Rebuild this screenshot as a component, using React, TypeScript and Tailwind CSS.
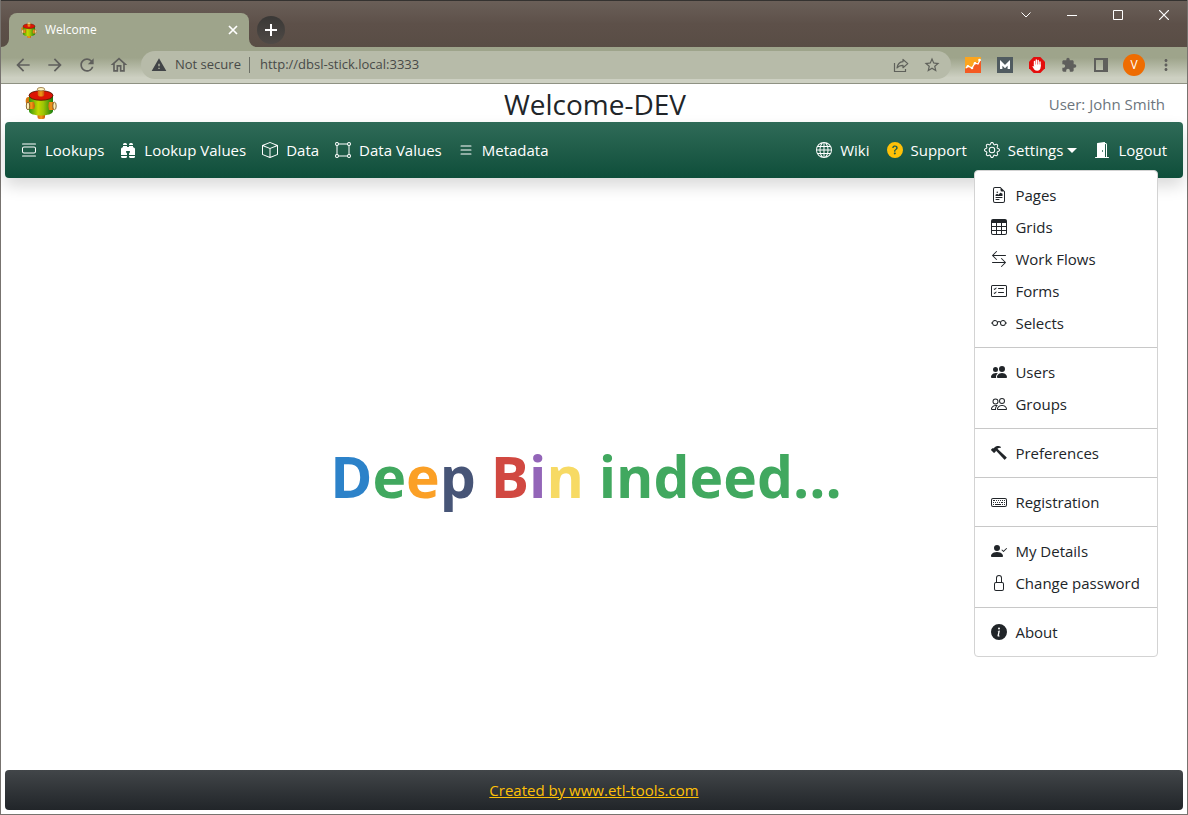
import type { ComponentType } from "react";
import {
  BsArrowLeftRight, BsBinocularsFill, BsBoundingBoxCircles, BsBox, BsCardChecklist, BsDoorOpenFill,
  BsEyeglasses, BsFileEarmarkRichtext, BsGear, BsGlobe, BsHammer, BsInfoCircleFill, BsKeyboard,
  BsList, BsLock, BsPeople, BsPeopleFill, BsPersonCheckFill, BsQuestionCircleFill, BsTable, BsViewList,
} from "react-icons/bs";
import {
  MdArrowBack, MdArrowForward, MdOutlineHome, MdRefresh, MdWarning, MdStarBorder, MdExtension,
  MdMoreVert,
} from "react-icons/md";

type Icon = ComponentType<{ className?: string }>;
type Entry = { label: string; icon: Icon; tint?: string };

const leftNav: Entry[] = [
  { label: "Lookups", icon: BsViewList },
  { label: "Lookup Values", icon: BsBinocularsFill },
  { label: "Data", icon: BsBox },
  { label: "Data Values", icon: BsBoundingBoxCircles },
  { label: "Metadata", icon: BsList },
];

const menu: Entry[][] = [
  [
    { label: "Pages", icon: BsFileEarmarkRichtext },
    { label: "Grids", icon: BsTable },
    { label: "Work Flows", icon: BsArrowLeftRight },
    { label: "Forms", icon: BsCardChecklist },
    { label: "Selects", icon: BsEyeglasses },
  ],
  [
    { label: "Users", icon: BsPeopleFill },
    { label: "Groups", icon: BsPeople },
  ],
  [{ label: "Preferences", icon: BsHammer }],
  [{ label: "Registration", icon: BsKeyboard }],
  [
    { label: "My Details", icon: BsPersonCheckFill },
    { label: "Change password", icon: BsLock },
  ],
  [{ label: "About", icon: BsInfoCircleFill }],
];

const headline = [
  ["D", "text-[#2c82c9]"], ["e", "text-[#41a85f]"], ["e", "text-[#fba026]"], ["p", "text-[#475577]"],
  [" ", ""], ["B", "text-[#d14841]"], ["i", "text-[#9365b8]"], ["n", "text-[#f7da64]"],
  [" indeed...", "text-[#41a85f]"],
];

function Barrel({ className, id }: { className: string; id: string }) {
  return (
    <svg viewBox="0 0 32 32" className={className} aria-hidden="true">
      <defs>
        <linearGradient id={id + "g"}>
          <stop offset="0" stopColor="#2f9410" />
          <stop offset=".38" stopColor="#c3d800" />
          <stop offset=".6" stopColor="#9cc406" />
          <stop offset="1" stopColor="#187c10" />
        </linearGradient>
        <linearGradient id={id + "o"}>
          <stop offset="0" stopColor="#d66a10" />
          <stop offset=".5" stopColor="#f09a18" />
          <stop offset="1" stopColor="#c85408" />
        </linearGradient>
      </defs>
      <rect x="12.500" y="26" width="7.500" height="6" rx="2" fill={`url(#${id}o)`} />
      <ellipse cx="3.500" cy="14" rx="2.800" ry="4" fill="#d9780c" />
      <path d="M4 8v16c0 6 24 6 24 0V8Z" fill={`url(#${id}g)`} />
      <ellipse cx="16" cy="8.500" rx="12" ry="4.800" fill="#dc1405" stroke="#4d1604" strokeWidth=".8" />
      <rect x="12.800" y="2" width="6.400" height="7.500" rx="2" fill={`url(#${id}o)`} />
      <ellipse cx="16" cy="2.200" rx="3.700" ry="1.700" fill="#fff3bf" stroke="#8a6a32" strokeWidth=".8" />
      <path d="M3 15h6q1.500 3.500 0 7H3Z" fill={`url(#${id}o)`} />
      <ellipse cx="3" cy="19" rx="1.700" ry="3.800" fill="#fff0b5" stroke="#7a5a28" strokeWidth=".9" />
      <path d="M24 15h5v8h-5q-1.500-4 0-8Z" fill={`url(#${id}o)`} />
      <ellipse cx="29.500" cy="19" rx="1.700" ry="3.800" fill="#fff0b5" stroke="#7a5a28" strokeWidth=".9" />
    </svg>
  );
}

function TabStrip() {
  return (
    <div className="flex h-[47px] items-end border-t border-[#343230] bg-linear-to-b from-[#6a5f58] via-[#5d5049] to-[#594d45] pl-2">
      <div className="relative flex h-[34px] w-60 items-center rounded-t-lg bg-[#9ea48b] pr-2 pl-3 text-white">
        <svg viewBox="0 0 8 8" className="absolute bottom-0 -left-2 size-2" aria-hidden="true"><path d="M8 0v8H0a8 8 0 0 0 8-8" fill="#9ea48b" /></svg>
        <svg viewBox="0 0 8 8" className="absolute -right-2 bottom-0 size-2" aria-hidden="true"><path d="M0 0v8h8a8 8 0 0 1-8-8" fill="#9ea48b" /></svg>
        <Barrel className="size-4" id="tab" />
        <span className="ml-2 flex-1 text-xs">Welcome</span>
        <button aria-label="Close tab" className="flex size-4 items-center justify-center">
          <svg viewBox="0 0 16 16" className="size-4" fill="none" stroke="currentColor" strokeWidth="1.700"><path d="m4 4 8 8M12 4l-8 8" /></svg>
        </button>
      </div>
      <button aria-label="New tab" className="mb-[3px] ml-2 flex size-7 items-center justify-center rounded-full bg-linear-to-b from-[#3a3836] to-[#4f4a46] text-white">
        <svg viewBox="0 0 12 12" className="size-3" fill="none" stroke="currentColor" strokeWidth="2"><path d="M6 0v12M0 6h12" /></svg>
      </button>
      <div className="ml-auto flex h-7 self-start text-white">
        <button aria-label="Search tabs" className="flex w-[46px] items-center justify-center">
          <svg viewBox="0 0 10 6" className="h-1.5 w-2.5" fill="none" stroke="currentColor"><path d="m.5.5 4.500 4.500L9.500.5" /></svg>
        </button>
        <button aria-label="Minimize" className="flex w-[46px] items-center justify-center">
          <svg viewBox="0 0 10 10" className="size-2.5" fill="none" stroke="currentColor"><path d="M0 5.500h10" /></svg>
        </button>
        <button aria-label="Maximize" className="flex w-[46px] items-center justify-center">
          <svg viewBox="0 0 10 10" className="size-2.5" fill="none" stroke="currentColor"><path d="M.5.5h9v9h-9z" /></svg>
        </button>
        <button aria-label="Close" className="flex w-[46px] items-center justify-center">
          <svg viewBox="0 0 10 10" className="size-2.5" fill="none" stroke="currentColor" strokeWidth="1.200"><path d="m0 0 10 10M10 0 0 10" /></svg>
        </button>
      </div>
    </div>
  );
}

function Toolbar() {
  return (
    <div className="flex h-[37px] items-center border-b border-[#8f9283] bg-linear-to-b from-[#9ea48b] from-30% to-[#cdd0c2] to-85% text-[#5f5f5c]">
      <div className="flex gap-3 pl-3">
        <button aria-label="Back"><MdArrowBack className="size-5" /></button>
        <button aria-label="Forward"><MdArrowForward className="size-5" /></button>
        <button aria-label="Reload"><MdRefresh className="size-5" /></button>
        <button aria-label="Home"><MdOutlineHome className="size-5" /></button>
      </div>
      <div className="ml-3 flex h-7 flex-1 items-center rounded-full bg-[#b7bba9] px-2.5 text-[13px] text-[#484a48]">
        <MdWarning className="size-4 shrink-0 text-[#414447]" />
        <span className="ml-2 whitespace-nowrap">Not secure</span>
        <span className="mr-2.5 ml-2 h-4 w-px bg-[#6c6f65]" />
        <input
          aria-label="Address"
          defaultValue="http://dbsl-stick.local:3333"
          className="min-w-0 flex-1 bg-transparent outline-none"
        />
        <button aria-label="Share">
          <svg viewBox="0 0 16 16" className="size-4" fill="none" stroke="#5f615b" strokeWidth="1.200">
            <path d="M1.500 6v8.500h11V12" />
            <path d="M10 2.500v2.200C6.500 5 4.500 7.500 4 11c1.500-2 3.300-2.700 6-2.700v2.400l4.800-4.100Z" strokeLinejoin="round" />
          </svg>
        </button>
        <button aria-label="Bookmark" className="ml-3.5"><MdStarBorder className="size-[18px] text-[#5f615b]" /></button>
      </div>
      <div className="flex items-center gap-4 px-3.5">
        <button aria-label="Analytics">
          <svg viewBox="0 0 16 16" className="size-4">
            <path d="M0 0h16v16H0z" fill="#fba51f" />
            <path d="m0 12 3-2 4 2 3-6 4-1 2-2v13H0z" fill="#f45a22" />
            <path d="m1 11 2-2 4 2 3-5 3 1 2-4" fill="none" stroke="#fff" strokeWidth="1.300" />
            <g fill="#fff"><circle cx="2.800" cy="9.300" r="1.200" /><circle cx="7" cy="11" r="1.300" /><circle cx="10" cy="6.300" r="1.300" /><circle cx="14.500" cy="3" r="1.300" /></g>
          </svg>
        </button>
        <button aria-label="Mail" className="flex size-4 items-center justify-center bg-[#505b60]">
          <svg viewBox="0 0 16 16" className="size-4" fill="none" stroke="#fff" strokeWidth="2.400"><path d="M4.200 12V5.800L8 9.500l3.800-3.700V12" /></svg>
        </button>
        <button aria-label="Ad blocker">
          <svg viewBox="0 0 16 16" className="size-4">
            <path d="M4.700 0h6.600L16 4.700v6.600L11.300 16H4.700L0 11.300V4.700Z" fill="#e40d0d" />
            <path d="M5.500 8.500V4.500M7.300 8V3M9.200 8V3.400M11 9V5" stroke="#fff" strokeWidth="1.400" strokeLinecap="round" />
            <path d="M4.800 7.500h6.900v2.200c0 2.500-1.500 4-3.500 4-2.400 0-3.300-1.500-4.800-4.300.7-.6 1.200-.3 1.800.4Z" fill="#fff" />
          </svg>
        </button>
        <button aria-label="Extensions"><MdExtension className="size-4" /></button>
        <button aria-label="Side panel">
          <svg viewBox="0 0 16 16" className="size-4"><path d="M1 1h14v14H1zM3 3v10h7V3z" fill="currentColor" fillRule="evenodd" /></svg>
        </button>
      </div>
      <button aria-label="Profile" className="size-[22px] rounded-full bg-[#ee6c02] text-xs text-white">V</button>
      <button aria-label="More" className="mr-3 ml-3"><MdMoreVert className="size-[18px]" /></button>
    </div>
  );
}

function NavLink({ label, icon: Glyph, tint }: Entry) {
  return (
    <a href="#" className="flex items-center gap-2 whitespace-nowrap">
      <Glyph className={"size-4 shrink-0 " + (tint ?? "text-white")} />
      {label}
    </a>
  );
}

function SettingsMenu() {
  return (
    <div className="absolute top-[31px] right-[-81px] z-10 w-[184px] rounded border border-[#d3d3d3] bg-white py-2 text-[#212529]">
      {menu.map((group, i) => (
        <ul key={i} className={i ? "mt-2 border-t border-[#c8c8c8] pt-2" : ""}>
          {group.map(({ label, icon: Glyph }) => (
            <li key={label}>
              <a href="#" className="flex h-8 items-center gap-2 px-4 whitespace-nowrap">
                <Glyph className="size-4 shrink-0" />
                {label}
              </a>
            </li>
          ))}
        </ul>
      ))}
    </div>
  );
}

export default function App() {
  return (
    <div className="flex min-h-screen flex-col border-x border-b border-[#77736f] bg-white font-['Open_Sans','Noto_Sans',sans-serif]">
      <TabStrip />
      <Toolbar />
      <div className="flex flex-1 flex-col px-1 pb-1">
        <header className="grid h-[38px] grid-cols-3 items-center pr-[18px] pl-5">
          <Barrel className="size-8" id="logo" />
          <h1 className="pt-0.5 text-center text-[28px] leading-9 font-medium text-[#212529]">Welcome-DEV</h1>
          <p className="pt-0.5 text-right text-[15px] text-[#6c757d]">User: John Smith</p>
        </header>
        <nav className="flex h-14 items-center justify-between rounded bg-linear-to-b from-[#2f6b58] to-[#0d4e3a] px-4 text-[15px] text-white shadow-[0_8px_16px_rgba(0,0,0,0.15)]">
          <div className="flex gap-4">
            {leftNav.map((item) => <NavLink key={item.label} {...item} />)}
          </div>
          <div className="flex gap-[17px]">
            <NavLink label="Wiki" icon={BsGlobe} />
            <NavLink label="Support" icon={BsQuestionCircleFill} tint="text-[#ffc107]" />
            <div className="relative">
              <button aria-expanded="true" className="flex items-center gap-2">
                <BsGear className="size-4 text-white" />
                <span className="flex items-center gap-1">
                  Settings
                  <span className="border-x-[5px] border-t-[5px] border-x-transparent border-t-white" />
                </span>
              </button>
              <SettingsMenu />
            </div>
            <NavLink label="Logout" icon={BsDoorOpenFill} />
          </div>
        </nav>
        <main className="flex flex-1 items-center justify-center pt-1 pr-4">
          <p className="text-[57px] leading-none font-bold whitespace-pre">
            {headline.map(([text, color], i) => <span key={i} className={color}>{text}</span>)}
          </p>
        </main>
        <footer className="flex h-10 items-center justify-center rounded bg-linear-to-b from-[#424649] to-[#212529] text-[15px]">
          <a href="#" className="text-[#ffc107] underline">Created by www.etl-tools.com</a>
        </footer>
      </div>
    </div>
  );
}
